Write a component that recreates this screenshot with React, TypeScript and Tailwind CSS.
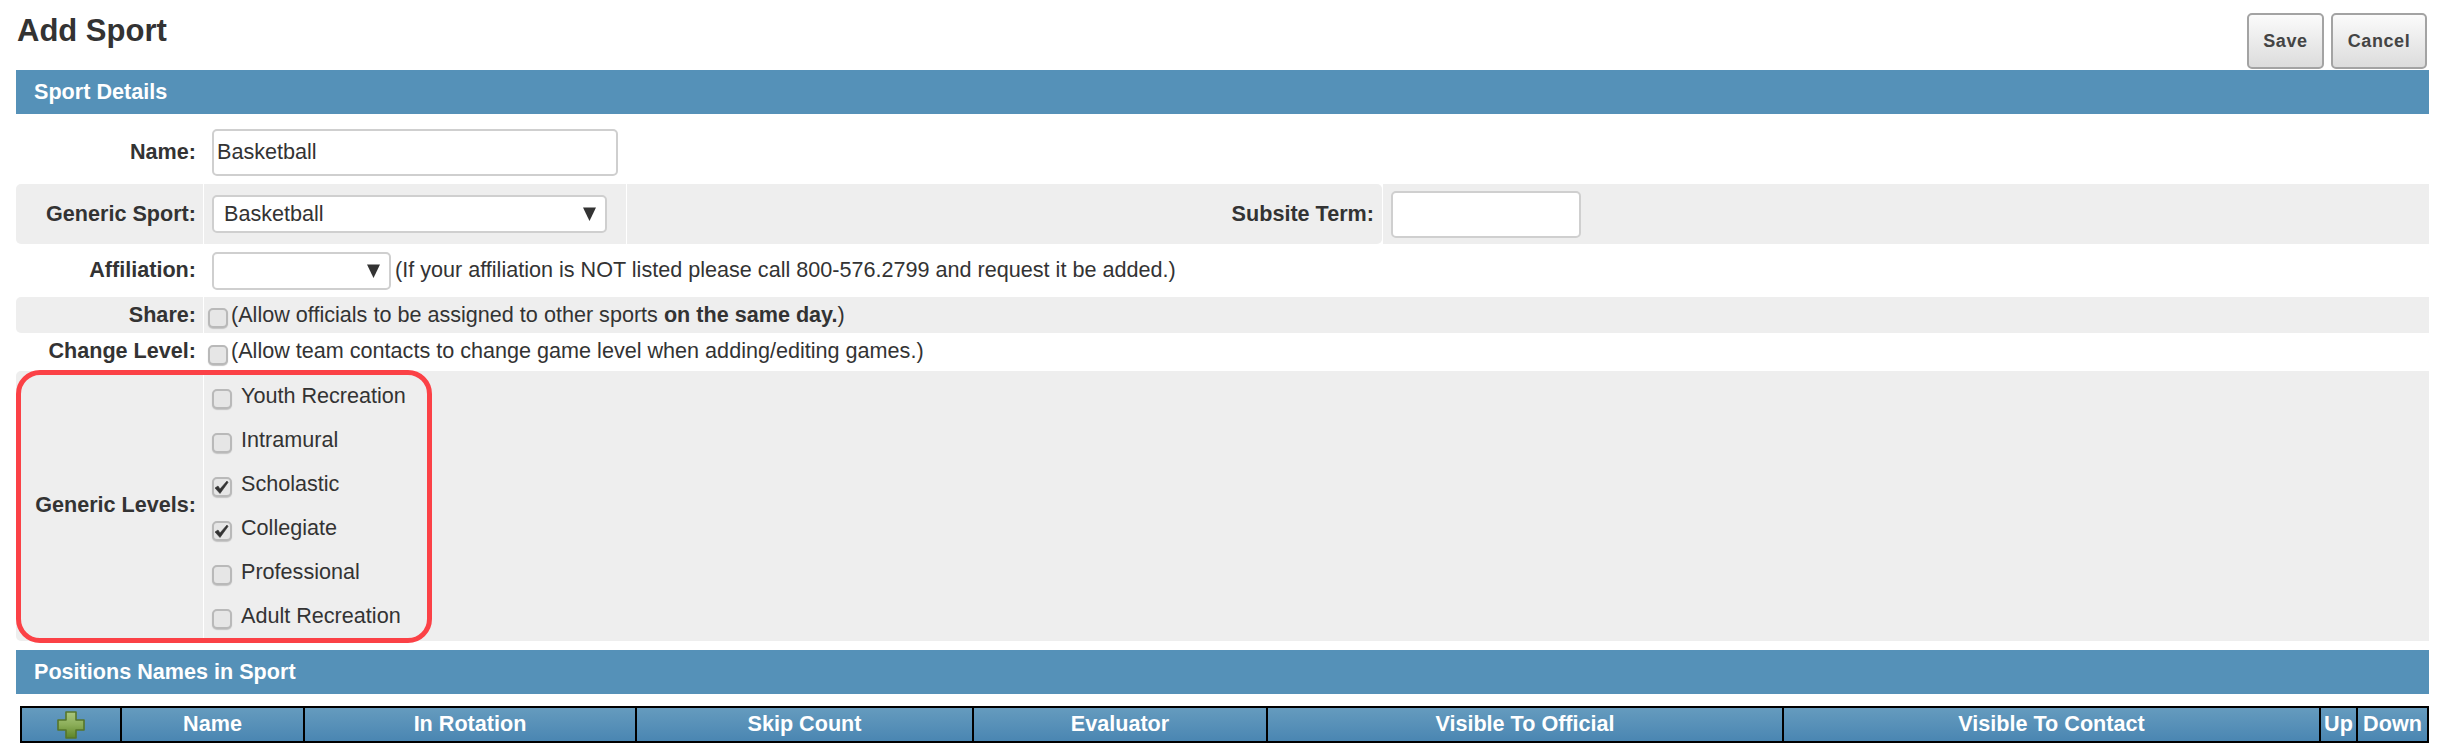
import type { ReactNode } from 'react';

const FONT = "[font-family:'Liberation_Sans',Arial,sans-serif]";

const levels = [
  { name: 'Youth Recreation', checked: false },
  { name: 'Intramural', checked: false },
  { name: 'Scholastic', checked: true },
  { name: 'Collegiate', checked: true },
  { name: 'Professional', checked: false },
  { name: 'Adult Recreation', checked: false },
];

const columns = [
  { name: 'Name', width: 'w-[183px]' },
  { name: 'In Rotation', width: 'w-[332px]' },
  { name: 'Skip Count', width: 'w-[337px]' },
  { name: 'Evaluator', width: 'w-[294px]' },
  { name: 'Visible To Official', width: 'w-[516px]' },
  { name: 'Visible To Contact', width: 'w-[537px]' },
  { name: 'Up', width: 'w-[37px]' },
  { name: 'Down', width: 'flex-1' },
];

const SectionBar = ({ children }: { children: ReactNode }) => (
  <div className="flex h-[44px] items-center bg-[#5591b8] pl-[18px] text-[21.6px] font-bold text-white">
    {children}
  </div>
);

const Label = ({ children, className }: { children: ReactNode; className: string }) => (
  <div
    className={`flex w-[187px] shrink-0 justify-end pr-[7px] text-[21.6px] font-bold text-[#333] ${className}`}
  >
    {children}
  </div>
);

const Check = ({ checked, className }: { checked?: boolean; className?: string }) => (
  <span
    className={`relative block h-[20px] w-[20px] shrink-0 rounded-[5px] border-2 border-[#b9b9b9] bg-[#e6e6e6] shadow-[0_1px_1px_#c4c4c4] ${className ?? ''}`}
  >
    {checked && (
      <svg viewBox="0 0 20 20" className="absolute top-[-2px] left-[-2px] h-[20px] w-[20px]">
        <path d="M3 11 L6 9 L8 12 L15 4 L16 5.5 L8 16.5 Z" fill="#333" stroke="#333" strokeWidth="0.6" strokeLinejoin="round" />
      </svg>
    )}
  </span>
);

const SelectBox = ({ value, className }: { value?: string; className: string }) => (
  <div
    className={`flex items-center justify-between rounded-[5px] border-2 border-[#cfcfcf] bg-white text-[21.6px] text-[#333] ${className}`}
  >
    <span className="pl-[10px]">{value}</span>
    <svg viewBox="0 0 13 14" className="mr-[9px] h-[14px] w-[13px]">
      <path d="M0 0.5 H13 L6.5 14 Z" fill="#333" />
    </svg>
  </div>
);

const PlusIcon = () => (
  <svg viewBox="0 0 28 28" className="h-[28px] w-[28px]">
    <defs>
      <linearGradient id="plus" x1="0" y1="0" x2="0" y2="1">
        <stop offset="0" stopColor="#a9c77e" />
        <stop offset="0.5" stopColor="#8bad58" />
        <stop offset="1" stopColor="#5c8427" />
      </linearGradient>
    </defs>
    <path
      d="M9 1 H19 V9 H27 V19 H19 V27 H9 V19 H1 V9 H9 Z"
      fill="url(#plus)"
      stroke="#56752a"
      strokeWidth="1.6"
      strokeLinejoin="round"
    />
  </svg>
);

export default function App() {
  return (
    <div className={`h-[747px] w-[2441px] overflow-hidden bg-white ${FONT}`}>
      <div className="mr-[12px] ml-[16px]">
        <div className="flex h-[70px] items-start justify-between">
          <h1 className="mt-[12px] ml-[1px] text-[31px] leading-[38px] font-bold text-[#333]">Add Sport</h1>
          <div className="mt-[13px] mr-[2px] flex gap-[7px]">
            <button className="h-[56px] w-[77px] rounded-[5px] border-2 border-[#a3a3a3] bg-gradient-to-b from-[#fbfbfb] to-[#dcdcdc] text-[18px] font-bold tracking-[0.6px] text-[#444]">
              Save
            </button>
            <button className="h-[56px] w-[96px] rounded-[5px] border-2 border-[#a3a3a3] bg-gradient-to-b from-[#fbfbfb] to-[#dcdcdc] text-[18px] font-bold tracking-[0.6px] text-[#444]">
              Cancel
            </button>
          </div>
        </div>

        <SectionBar>Sport Details</SectionBar>

        {/* name */}
        <div className="flex h-[70px] items-center pt-[7px]">
          <Label className="">Name:</Label>
          <div className="ml-[9px] flex h-[47px] w-[406px] items-center rounded-[5px] border-2 border-[#cfcfcf] bg-white pl-[3px] text-[21.6px] text-[#333]">
            Basketball
          </div>
        </div>

        {/* generic sport / subsite term */}
        <div className="flex h-[60px] gap-[1px]">
          <Label className="h-full items-center rounded-l-[5px] bg-[#eeeeee]">Generic Sport:</Label>
          <div className="flex w-[422px] items-center bg-[#eeeeee] pl-[8px]">
            <SelectBox value="Basketball" className="h-[38px] w-[395px]" />
          </div>
          <div className="flex w-[755px] items-center justify-end rounded-r-[5px] bg-[#eeeeee] pr-[8px] text-[21.6px] font-bold text-[#333]">
            Subsite Term:
          </div>
          <div className="flex flex-1 items-center bg-[#eeeeee] pl-[8px]">
            <div className="h-[47px] w-[190px] rounded-[5px] border-2 border-[#cfcfcf] bg-white" />
          </div>
        </div>

        {/* affiliation */}
        <div className="flex h-[53px] items-center">
          <Label className="">Affiliation:</Label>
          <SelectBox className="ml-[9px] h-[38px] w-[179px]" />
          <span className="ml-[4px] text-[21.6px] text-[#333]">
            (If your affiliation is NOT listed please call 800-576.2799 and request it be added.)
          </span>
        </div>

        {/* share */}
        <div className="flex h-[36px] gap-[1px]">
          <Label className="h-full items-center rounded-l-[5px] bg-[#eeeeee]">Share:</Label>
          <div className="flex flex-1 items-center bg-[#eeeeee] text-[21.6px] text-[#333]">
            <Check className="mt-[5px] ml-[4px]" />
            <span className="ml-[3px]">
              (Allow officials to be assigned to other sports <b>on the same day.</b>)
            </span>
          </div>
        </div>

        {/* change level */}
        <div className="flex h-[38px] gap-[1px]">
          <Label className="h-full items-center pb-[2px]">Change Level:</Label>
          <div className="flex flex-1 items-center text-[21.6px] text-[#333]">
            <Check className="mt-[5px] ml-[4px]" />
            <span className="mb-[2px] ml-[3px]">(Allow team contacts to change game level when adding/editing games.)</span>
          </div>
        </div>

        {/* generic levels */}
        <div className="relative flex h-[270px] gap-[1px]">
          <Label className="h-full items-center rounded-l-[5px] bg-[#eeeeee] pb-[2px]">Generic Levels:</Label>
          <div className="flex flex-1 flex-col bg-[#eeeeee] pt-[3px] pl-[8px] text-[21.6px] text-[#333]">
            {levels.map((level) => (
              <div key={level.name} className="flex h-[44px] items-center">
                <Check checked={level.checked} className="mt-[6px]" />
                <span className="ml-[9px]">{level.name}</span>
              </div>
            ))}
          </div>
          <div className="absolute top-[-1px] left-0 h-[273px] w-[416px] rounded-[24px] border-[5px] border-[#fb4146]" />
        </div>

        <div className="mt-[9px]">
          <SectionBar>Positions Names in Sport</SectionBar>
        </div>

        {/* positions table header */}
        <div className="mt-[12px] ml-[4px] flex h-[37px] border-2 border-black bg-gradient-to-b from-[#659bbe] to-[#4a86b2] text-[21.6px] font-bold text-white">
          <div className="flex w-[98px] items-center justify-center">
            <PlusIcon />
          </div>
          {columns.map((col) => (
            <div
              key={col.name}
              className={`flex items-center justify-center border-l-2 border-black ${col.width}`}
            >
              {col.name}
            </div>
          ))}
        </div>
      </div>
    </div>
  );
}
